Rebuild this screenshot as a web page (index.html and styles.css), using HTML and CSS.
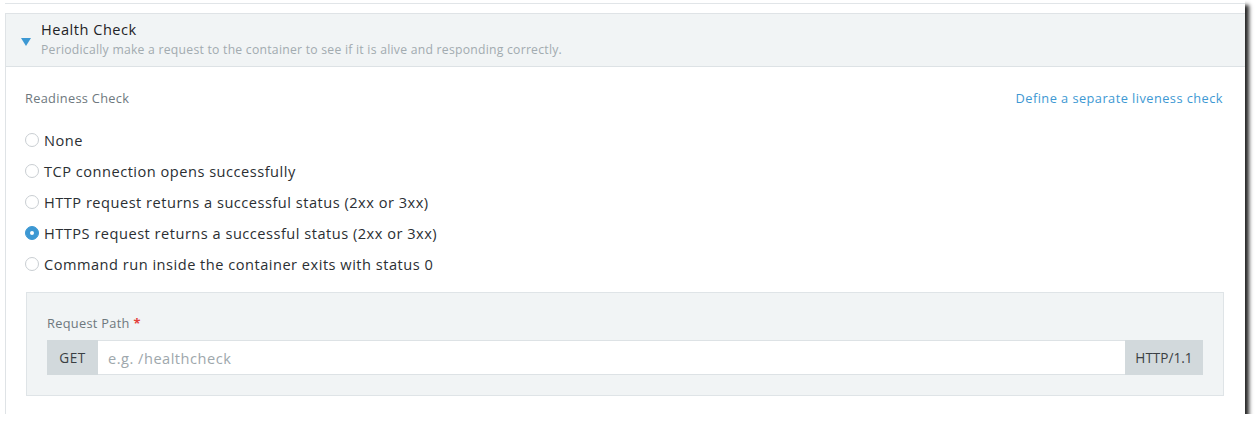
FILE: index.html
```html
<!DOCTYPE html>
<html>
<head>
<meta charset="utf-8">
<link rel="stylesheet" href="styles.css">
</head>
<body>
<div class="frame">
  <div class="prev"></div>
  <div class="panel">
    <div class="panel-head">
      <svg class="caret" width="10" height="8" viewBox="0 0 10 8"><polygon points="0,0 10,0 5,8" fill="#3d98d3"/></svg>
      <div class="head-text">
        <div class="title">Health Check</div>
        <div class="subtitle">Periodically make a request to the container to see if it is alive and responding correctly.</div>
      </div>
    </div>
    <div class="panel-body">
      <div class="row-top">
        <span class="label">Readiness Check</span>
        <a class="link">Define a separate liveness check</a>
      </div>
      <div class="radios">
        <label class="radio"><span class="dot"></span>None</label>
        <label class="radio"><span class="dot"></span>TCP connection opens successfully</label>
        <label class="radio"><span class="dot"></span>HTTP request returns a successful status (2xx or 3xx)</label>
        <label class="radio"><span class="dot on"></span>HTTPS request returns a successful status (2xx or 3xx)</label>
        <label class="radio"><span class="dot"></span>Command run inside the container exits with status 0</label>
      </div>
      <div class="box">
        <div class="label">Request Path <span class="req">*</span></div>
        <div class="group">
          <span class="addon get">GET</span>
          <span class="input">e.g. /healthcheck</span>
          <span class="addon ver">HTTP/1.1</span>
        </div>
      </div>
    </div>
  </div>
</div>
</body>
</html>
```

FILE: styles.css
```css
html, body {
  margin: 0;
  padding: 0;
  background: #ffffff;
}
body {
  font-family: "Open Sans", "Noto Sans", sans-serif;
  color: #2b2f33;
}
.frame {
  width: 1245px;
  height: 414px;
  overflow: hidden;
  background: #ffffff;
  box-shadow: 4px 5px 4px rgba(0, 0, 0, 0.85);
}
.prev {
  margin-left: 5px;
  height: 3px;
  border-bottom: 1px solid #e1e5e8;
}
.panel {
  margin-top: 9px;
  margin-left: 5px;
  width: 1245px;
  height: 420px;
  border-left: 1px solid #dfe3e6;
  border-top: 1px solid #dfe3e6;
  box-sizing: border-box;
}
.panel-head {
  height: 53px;
  background: #f1f4f5;
  border-bottom: 1px solid #dde2e5;
  display: flex;
  align-items: center;
  box-sizing: border-box;
  padding-left: 15px;
}
.caret {
  margin-top: 3px;
  margin-right: 10px;
}
.head-text {
  margin-top: -2px;
}
.title {
  font-size: 14.6px;
  line-height: 20px;
  letter-spacing: 0.5px;
  color: #1f2326;
}
.subtitle {
  font-size: 12.2px;
  line-height: 18px;
  letter-spacing: 0.25px;
  color: #a2abb0;
  margin-top: 2px;
}
.panel-body {
  padding: 22px 26px 0 20px;
}
.row-top {
  display: flex;
  justify-content: space-between;
  align-items: center;
  height: 18px;
}
.label {
  font-size: 12.8px;
  line-height: 18px;
  letter-spacing: 0.3px;
  color: #6e787e;
}
.row-top .label {
  margin-left: -1px;
}
.link {
  font-size: 12.8px;
  letter-spacing: 0.45px;
  color: #3d98d3;
  margin-right: 1px;
}
.radios {
  margin-top: 17px;
  display: flex;
  flex-direction: column;
  margin-left: -1px;
}
.radio {
  display: flex;
  align-items: center;
  height: 31px;
  font-size: 14.6px;
  letter-spacing: 0.5px;
  color: #2b2f33;
}
.dot {
  width: 12px;
  height: 12px;
  border: 1px solid #c9ced2;
  border-radius: 50%;
  background: #fff;
  margin-right: 5px;
  box-sizing: content-box;
  position: relative;
}
.dot.on {
  background: #3d98d3;
  border-color: #3d98d3;
}
.dot.on::after {
  content: "";
  position: absolute;
  left: 4px;
  top: 4px;
  width: 4px;
  height: 4px;
  border-radius: 50%;
  background: #fff;
}
.box {
  margin-top: 13px;
  background: #f1f4f5;
  border: 1px solid #dfe4e7;
  padding: 21px 20px 20px 20px;
}
.req {
  color: #e3403a;
  font-weight: bold;
}
.group {
  margin-top: 8px;
  display: flex;
  height: 35px;
}
.addon {
  display: flex;
  align-items: center;
  justify-content: center;
  background: #d2d9dc;
  font-size: 13.6px;
  color: #3a3f43;
}
.get {
  width: 51px;
  letter-spacing: 0.5px;
}
.ver {
  width: 78px;
}
.input {
  flex: 1;
  background: #fff;
  border-top: 1px solid #dde2e5;
  border-bottom: 1px solid #dde2e5;
  display: flex;
  align-items: center;
  padding-left: 10px;
  font-size: 14.6px;
  letter-spacing: 0.5px;
  color: #9ea7ac;
}
```
